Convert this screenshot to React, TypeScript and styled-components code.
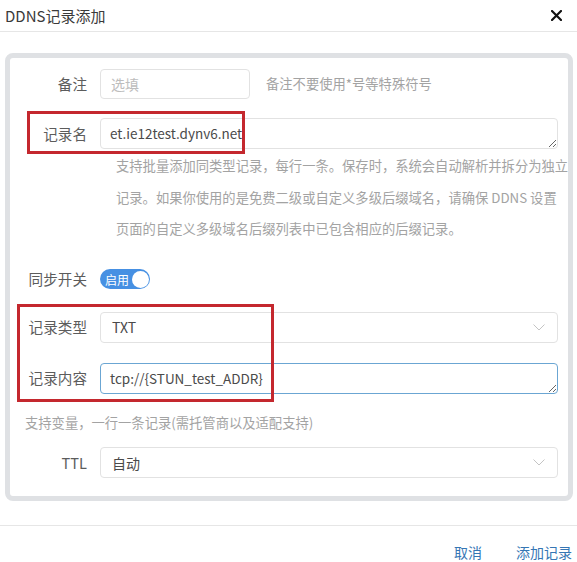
import React from 'react';
import styled, { createGlobalStyle } from 'styled-components';

const GlobalStyle = createGlobalStyle`
  html, body {
    margin: 0;
    padding: 0;
    background: #fff;
  }
  body {
    font-family: "Noto Sans CJK SC", "Noto Sans", sans-serif;
    color: #333;
  }
  * {
    box-sizing: border-box;
  }
`;

const Dialog = styled.div`
  position: relative;
  width: 577px;
  height: 562px;
  overflow: hidden;
`;

const Header = styled.div`
  height: 32px;
  display: flex;
  align-items: center;
  justify-content: space-between;
  padding: 0 15px 0 5px;
  border-bottom: 1px solid #e6e6e6;
`;

const Title = styled.div`
  font-size: 15px;
  color: #3a3a3a;
  line-height: 20px;
`;

const Close = styled.button`
  border: none;
  background: none;
  padding: 0;
  width: 12px;
  height: 12px;
  display: flex;
  align-items: center;
  justify-content: center;
  cursor: pointer;
`;

const Panel = styled.div`
  margin: 21px 4px 0 5px;
  border: 5px solid #dfe1e4;
  border-radius: 8px;
  padding: 10px 10px 18px 0;
  display: flex;
  flex-direction: column;
`;

const Row = styled.div<{ $gap?: number }>`
  display: flex;
  align-items: center;
  gap: 13px;
  margin-top: ${(p) => p.$gap ?? 0}px;
  min-height: 31px;
`;

const Label = styled.label`
  width: 77px;
  flex: none;
  text-align: right;
  font-size: 14.6px;
  color: #5c5c5c;
  line-height: 20px;
`;

const Field = styled.input<{ $width?: number }>`
  width: ${(p) => (p.$width ? `${p.$width}px` : '100%')};
  flex: ${(p) => (p.$width ? 'none' : '1')};
  height: 30px;
  border: 1px solid #e2e2e2;
  border-radius: 4px;
  padding: 0 10px;
  font: inherit;
  font-size: 14px;
  color: #4a4a4a;
  outline: none;
  &::placeholder {
    color: #bdbdbd;
  }
`;

const Area = styled.textarea<{ $focus?: boolean }>`
  flex: 1;
  height: 31px;
  border: 1px solid ${(p) => (p.$focus ? '#6ba6d3' : '#e2e2e2')};
  border-radius: 4px;
  padding: 4px 9px 0;
  font: inherit;
  font-size: 13.5px;
  line-height: 20px;
  color: #4a4a4a;
  outline: none;
  resize: vertical;
  overflow: hidden;
`;

const SelectBox = styled.div`
  flex: 1;
  height: 31px;
  border: 1px solid #e2e2e2;
  border-radius: 4px;
  padding: 0 12px 0 11px;
  display: flex;
  align-items: center;
  justify-content: space-between;
  font-size: 14px;
  color: #4a4a4a;
`;

const Hint = styled.span`
  font-size: 13.3px;
  color: #a3a3a3;
  margin-left: 3px;
`;

const Help = styled.p<{ $indent: number; $gap: number }>`
  margin: ${(p) => p.$gap}px 0 0 ${(p) => p.$indent}px;
  font-size: 13.3px;
  color: #a3a3a3;
  white-space: nowrap;
`;

const HelpLine = styled.span`
  display: block;
  line-height: 31.5px;
`;

const Switch = styled.div`
  width: 50px;
  height: 20px;
  border-radius: 10px;
  background: #4690e3;
  display: flex;
  align-items: center;
  justify-content: space-between;
  padding: 0 1.5px 0 5px;
  color: #fff;
  font-size: 12px;
`;

const Knob = styled.span`
  width: 17px;
  height: 17px;
  border-radius: 50%;
  background: #fff;
`;

const Footer = styled.div`
  margin-top: 24px;
  border-top: 1px solid #e6e6e6;
  display: flex;
  justify-content: flex-end;
  gap: 34px;
  padding: 16px 5px 0 0;
`;

const LinkButton = styled.button`
  border: none;
  background: none;
  padding: 0;
  font: inherit;
  font-size: 14px;
  line-height: 20px;
  color: #3576b4;
  cursor: pointer;
`;

const Mark = styled.div<{ $x: number; $y: number; $w: number; $h: number }>`
  position: absolute;
  left: ${(p) => p.$x}px;
  top: ${(p) => p.$y}px;
  width: ${(p) => p.$w}px;
  height: ${(p) => p.$h}px;
  border: 3px solid #c4282e;
  pointer-events: none;
`;

const Chevron = () => (
  <svg width="12" height="7" viewBox="0 0 12 7" fill="none">
    <path d="M0.5 0.5L6 6L11.5 0.5" stroke="#c4c4c4" strokeWidth="1" />
  </svg>
);

export default function App() {
  return (
    <Dialog>
      <GlobalStyle />
      <Header>
        <Title>DDNS记录添加</Title>
        <Close aria-label="关闭">
          <svg width="11" height="11" viewBox="0 0 11 11">
            <path d="M1 1L10 10M10 1L1 10" stroke="#111" strokeWidth="2.2" strokeLinecap="round" />
          </svg>
        </Close>
      </Header>

      <Panel>
        <Row>
          <Label>备注</Label>
          <Field $width={150} placeholder="选填" />
          <Hint>备注不要使用*号等特殊符号</Hint>
        </Row>
        <Row $gap={19}>
          <Label>记录名</Label>
          <Area defaultValue="et.ie12test.dynv6.net" />
        </Row>
        <Help $indent={106} $gap={1}>
          <HelpLine>支持批量添加同类型记录，每行一条。保存时，系统会自动解析并拆分为独立</HelpLine>
          <HelpLine>记录。如果你使用的是免费二级或自定义多级后缀域名，请确保 DDNS 设置</HelpLine>
          <HelpLine>页面的自定义多级域名后缀列表中已包含相应的后缀记录。</HelpLine>
        </Help>
        <Row $gap={19}>
          <Label>同步开关</Label>
          <Switch>
            启用
            <Knob />
          </Switch>
        </Row>
        <Row $gap={17}>
          <Label>记录类型</Label>
          <SelectBox>
            TXT
            <Chevron />
          </SelectBox>
        </Row>
        <Row $gap={20}>
          <Label>记录内容</Label>
          <Area $focus defaultValue="tcp://{STUN_test_ADDR}" />
        </Row>
        <Help $indent={15} $gap={13}>
          <HelpLine>支持变量，一行一条记录(需托管商以及适配支持)</HelpLine>
        </Help>
        <Row $gap={9}>
          <Label>TTL</Label>
          <SelectBox>
            自动
            <Chevron />
          </SelectBox>
        </Row>
      </Panel>

      <Footer>
        <LinkButton>取消</LinkButton>
        <LinkButton>添加记录</LinkButton>
      </Footer>

      <Mark $x={27} $y={111} $w={218} $h={43} />
      <Mark $x={17} $y={304} $w={257} $h={98} />
    </Dialog>
  );
}
